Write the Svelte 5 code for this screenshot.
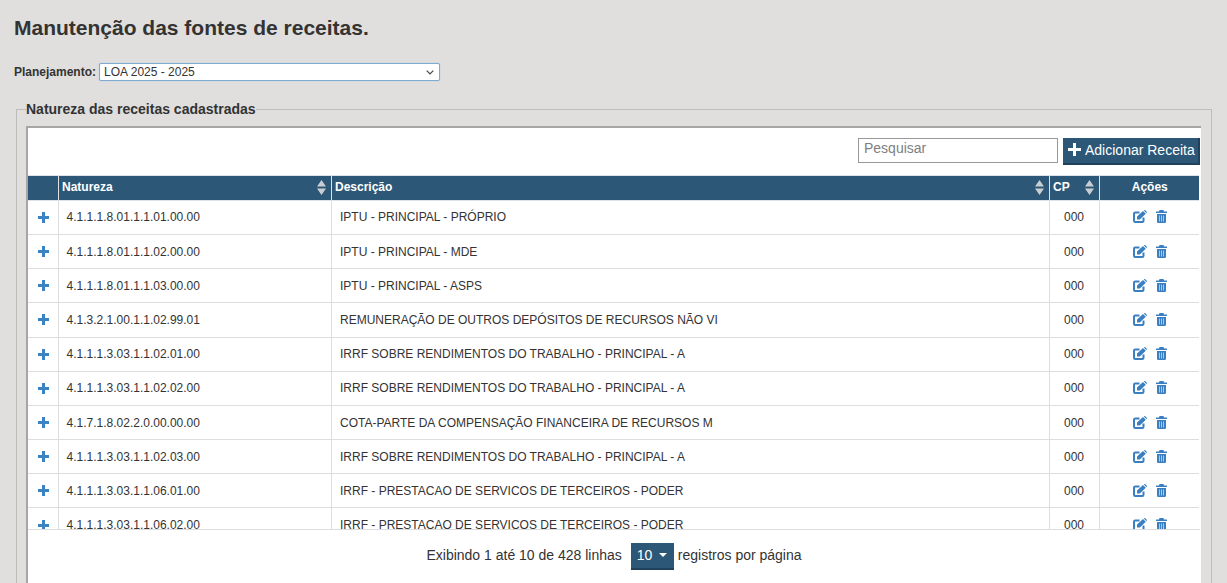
<script lang="ts">
	const rows = [
		['4.1.1.1.8.01.1.1.01.00.00', 'IPTU - PRINCIPAL - PRÓPRIO'],
		['4.1.1.1.8.01.1.1.02.00.00', 'IPTU - PRINCIPAL - MDE'],
		['4.1.1.1.8.01.1.1.03.00.00', 'IPTU - PRINCIPAL - ASPS'],
		['4.1.3.2.1.00.1.1.02.99.01', 'REMUNERAÇÃO DE OUTROS DEPÓSITOS DE RECURSOS NÃO VI'],
		['4.1.1.1.3.03.1.1.02.01.00', 'IRRF SOBRE RENDIMENTOS DO TRABALHO - PRINCIPAL - A'],
		['4.1.1.1.3.03.1.1.02.02.00', 'IRRF SOBRE RENDIMENTOS DO TRABALHO - PRINCIPAL - A'],
		['4.1.7.1.8.02.2.0.00.00.00', 'COTA-PARTE DA COMPENSAÇÃO FINANCEIRA DE RECURSOS M'],
		['4.1.1.1.3.03.1.1.02.03.00', 'IRRF SOBRE RENDIMENTOS DO TRABALHO - PRINCIPAL - A'],
		['4.1.1.1.3.03.1.1.06.01.00', 'IRRF - PRESTACAO DE SERVICOS DE TERCEIROS - PODER'],
		['4.1.1.1.3.03.1.1.06.02.00', 'IRRF - PRESTACAO DE SERVICOS DE TERCEIROS - PODER']
	];
</script>

{#snippet sortIcon()}
	<svg class="sort" width="9" height="15" viewBox="0 0 9 15" aria-hidden="true">
		<path d="M4.500 0 9 6.500H0Z M0 8.500H9L4.500 15Z" fill="#c9ced2" />
	</svg>
{/snippet}

<div class="page">
	<h1>Manutenção das fontes de receitas.</h1>

	<div class="plan">
		<label for="plan">Planejamento:</label>
		<div class="select-wrap">
			<select id="plan">
				<option>LOA 2025 - 2025</option>
			</select>
			<svg width="8" height="5" viewBox="0 0 8 5" aria-hidden="true">
				<path d="M.7.7 4 4 7.300.7" fill="none" stroke="#444" stroke-width="1.200" />
			</svg>
		</div>
	</div>

	<fieldset>
		<legend>Natureza das receitas cadastradas</legend>
		<div class="box">
			<div class="toolbar">
				<input type="text" placeholder="Pesquisar" />
				<button class="add">
					<svg width="13" height="13" viewBox="0 0 13 13" aria-hidden="true">
						<path d="M5 0H8V5H13V8H8V13H5V8H0V5H5Z" fill="#fff" />
					</svg>
					Adicionar Receita
				</button>
			</div>

			<div class="scroll">
				<table>
					<colgroup>
						<col style="width:30px" />
						<col style="width:273px" />
						<col style="width:718px" />
						<col style="width:50px" />
						<col />
					</colgroup>
					<thead>
						<tr>
							<th></th>
							<th><span class="th-in">Natureza {@render sortIcon()}</span></th>
							<th><span class="th-in">Descrição {@render sortIcon()}</span></th>
							<th><span class="th-in">CP {@render sortIcon()}</span></th>
							<th class="center acoes">Ações</th>
						</tr>
					</thead>
					<tbody>
						{#each rows as [code, desc]}
							<tr>
								<td class="expand">
									<svg width="11" height="11" viewBox="0 0 11 11" aria-hidden="true">
										<path d="M4 0H7V4H11V7H7V11H4V7H0V4H4Z" fill="#3a83c4" />
									</svg>
								</td>
								<td class="code">{code}</td>
								<td class="desc">{desc}</td>
								<td class="center">000</td>
								<td class="actions">
									<div class="acts">
										<svg width="14" height="13" viewBox="0 0 14 13" aria-hidden="true">
											<path
												d="M6.500 2.500H2.200C1.500 2.500 1 3 1 3.700V10.800C1 11.500 1.500 12 2.200 12H9.300C10 12 10.500 11.500 10.500 10.800V7.500"
												fill="none"
												stroke="#3a7fc1"
												stroke-width="2"
											/>
											<path d="M4 6.500 10 .9 12.800 3.700 6.800 9.500H4Z M11 .3 12 0 14 2 13.700 2.700 13.300 3 11 .7Z" fill="#3a7fc1" />
										</svg>
										<svg width="11" height="13" viewBox="0 0 11 13" aria-hidden="true">
											<path
												d="M3.500 0H7.500L8 1.500H11V3H0V1.500H3ZM1 4H10V11.500C10 12.300 9.500 13 8.800 13H2.200C1.500 13 1 12.300 1 11.500Z"
												fill="#3a7fc1"
											/>
											<path d="M3.500 5.500V11.500M5.500 5.500V11.500M7.500 5.500V11.500" stroke="#a9c9e6" stroke-width="1" />
										</svg>
									</div>
								</td>
							</tr>
						{/each}
					</tbody>
				</table>
			</div>

			<div class="pager">
				<span>Exibindo 1 até 10 de 428 linhas</span>
				<button class="size">10 <i class="caret"></i></button>
				<span>registros por página</span>
			</div>
		</div>
	</fieldset>
</div>

<style>
	:global(body) {
		background: #e0dfdd;
		font-family: 'Liberation Sans', Arial, sans-serif;
		color: #333;
	}

	.page {
		height: 583px;
		overflow: hidden;
		box-sizing: border-box;
		padding: 14px 15px 0 14px;
	}

	h1 {
		margin: 0;
		font-size: 21px;
		line-height: 28px;
		font-weight: bold;
		color: #333;
	}

	.plan {
		display: flex;
		align-items: center;
		gap: 3px;
		margin-top: 21px;
		font-size: 12px;
	}
	.plan label {
		font-weight: bold;
	}
	.select-wrap {
		position: relative;
		display: flex;
	}
	.select-wrap svg {
		position: absolute;
		top: 7px;
		right: 6px;
		pointer-events: none;
	}
	.plan select {
		appearance: none;
		width: 341px;
		height: 18px;
		box-sizing: border-box;
		padding: 0 0 0 4px;
		background: #fff;
		border: 1px solid #7ea9d3;
		border-radius: 2px;
		box-shadow: 0 0 1px #8fb6dc;
		font-family: inherit;
		font-size: 12px;
		color: #333;
	}

	fieldset {
		margin: 20px 0 0 2px;
		padding: 9px 10px 0 9px;
		border: 1px solid #bdbdb9;
		min-width: 0;
		height: 600px;
	}
	legend {
		padding: 0;
		font-size: 14px;
		font-weight: bold;
		line-height: 16px;
	}

	.box {
		height: 600px;
		background: #fff;
		border: 2px solid #a6a6a4;
		border-width: 2px 0 0 2px;
		padding-right: 1px;
	}

	.toolbar {
		display: flex;
		justify-content: flex-end;
		align-items: flex-start;
		gap: 5px;
		height: 37px;
		padding-top: 10px;
	}
	.toolbar input {
		width: 200px;
		height: 25px;
		box-sizing: border-box;
		padding: 0 5px 6px;
		border: 1px solid #999;
		font-family: inherit;
		font-size: 14px;
		outline: none;
	}
	.toolbar input::placeholder {
		color: #808080;
	}
	.add {
		display: flex;
		align-items: center;
		gap: 4px;
		width: 137px;
		height: 27px;
		box-sizing: border-box;
		padding: 0 0 2px 5px;
		background: #2c5777;
		border: none;
		border-right: 2px solid #1f415b;
		border-bottom: 2px solid #1f415b;
		color: #fff;
		font-family: inherit;
		font-size: 14px;
		white-space: nowrap;
	}

	.scroll {
		height: 354px;
		overflow: hidden;
		border-bottom: 1px solid #ddd;
	}
	table {
		width: 1171px;
		table-layout: fixed;
		border-collapse: collapse;
		font-size: 12px;
	}
	th {
		height: 24.8px;
		box-sizing: border-box;
		padding: 0 3px 1px;
		background: #2c5777;
		color: #fff;
		font-weight: bold;
		font-size: 12px;
		text-align: left;
		border-left: 1px solid #dfe3e6;
		border-right: 1px solid #dfe3e6;
		border-top: 1px solid #dde3e8;
		border-bottom: 1px solid #dde3e8;
	}
	th:first-child {
		border-left: none;
	}
	th:last-child {
		border-right: none;
	}
	th.acoes {
		padding-left: 4px;
	}
	.th-in {
		display: flex;
		align-items: center;
		justify-content: space-between;
		padding-left: 0.5px;
	}
	.sort {
		flex: none;
		margin-right: 2px;
	}
	td {
		height: 34.2px;
		box-sizing: border-box;
		padding: 0 8px;
		color: #333;
		border: 1px solid #ddd;
		border-top: none;
		white-space: nowrap;
		overflow: hidden;
	}
	td:first-child {
		border-left: none;
	}
	td:last-child {
		border-right: none;
	}
	td.desc {
		padding-left: 8.5px;
	}
	.center {
		text-align: center;
	}
	.expand {
		padding: 0;
		text-align: center;
	}
	.expand svg {
		display: block;
		margin: 0 auto 0 10px;
	}
	.acts {
		display: flex;
		justify-content: center;
		align-items: center;
		gap: 9px;
		padding: 0 0 1px 2px;
	}

	.pager {
		display: flex;
		justify-content: center;
		align-items: center;
		gap: 4px;
		margin-top: 13px;
		font-size: 14px;
	}
	.pager span {
		padding-bottom: 3px;
	}
	.size {
		display: flex;
		align-items: center;
		gap: 7px;
		width: 43px;
		height: 27px;
		box-sizing: border-box;
		margin-left: 5px;
		padding: 0 0 1px 6px;
		background: #2c5777;
		border: none;
		border-bottom: 2px solid #1f415b;
		color: #fff;
		font-family: inherit;
		font-size: 14px;
	}
	.caret {
		width: 0;
		height: 0;
		border-left: 4px solid transparent;
		border-right: 4px solid transparent;
		border-top: 4px solid #fff;
	}
</style>
